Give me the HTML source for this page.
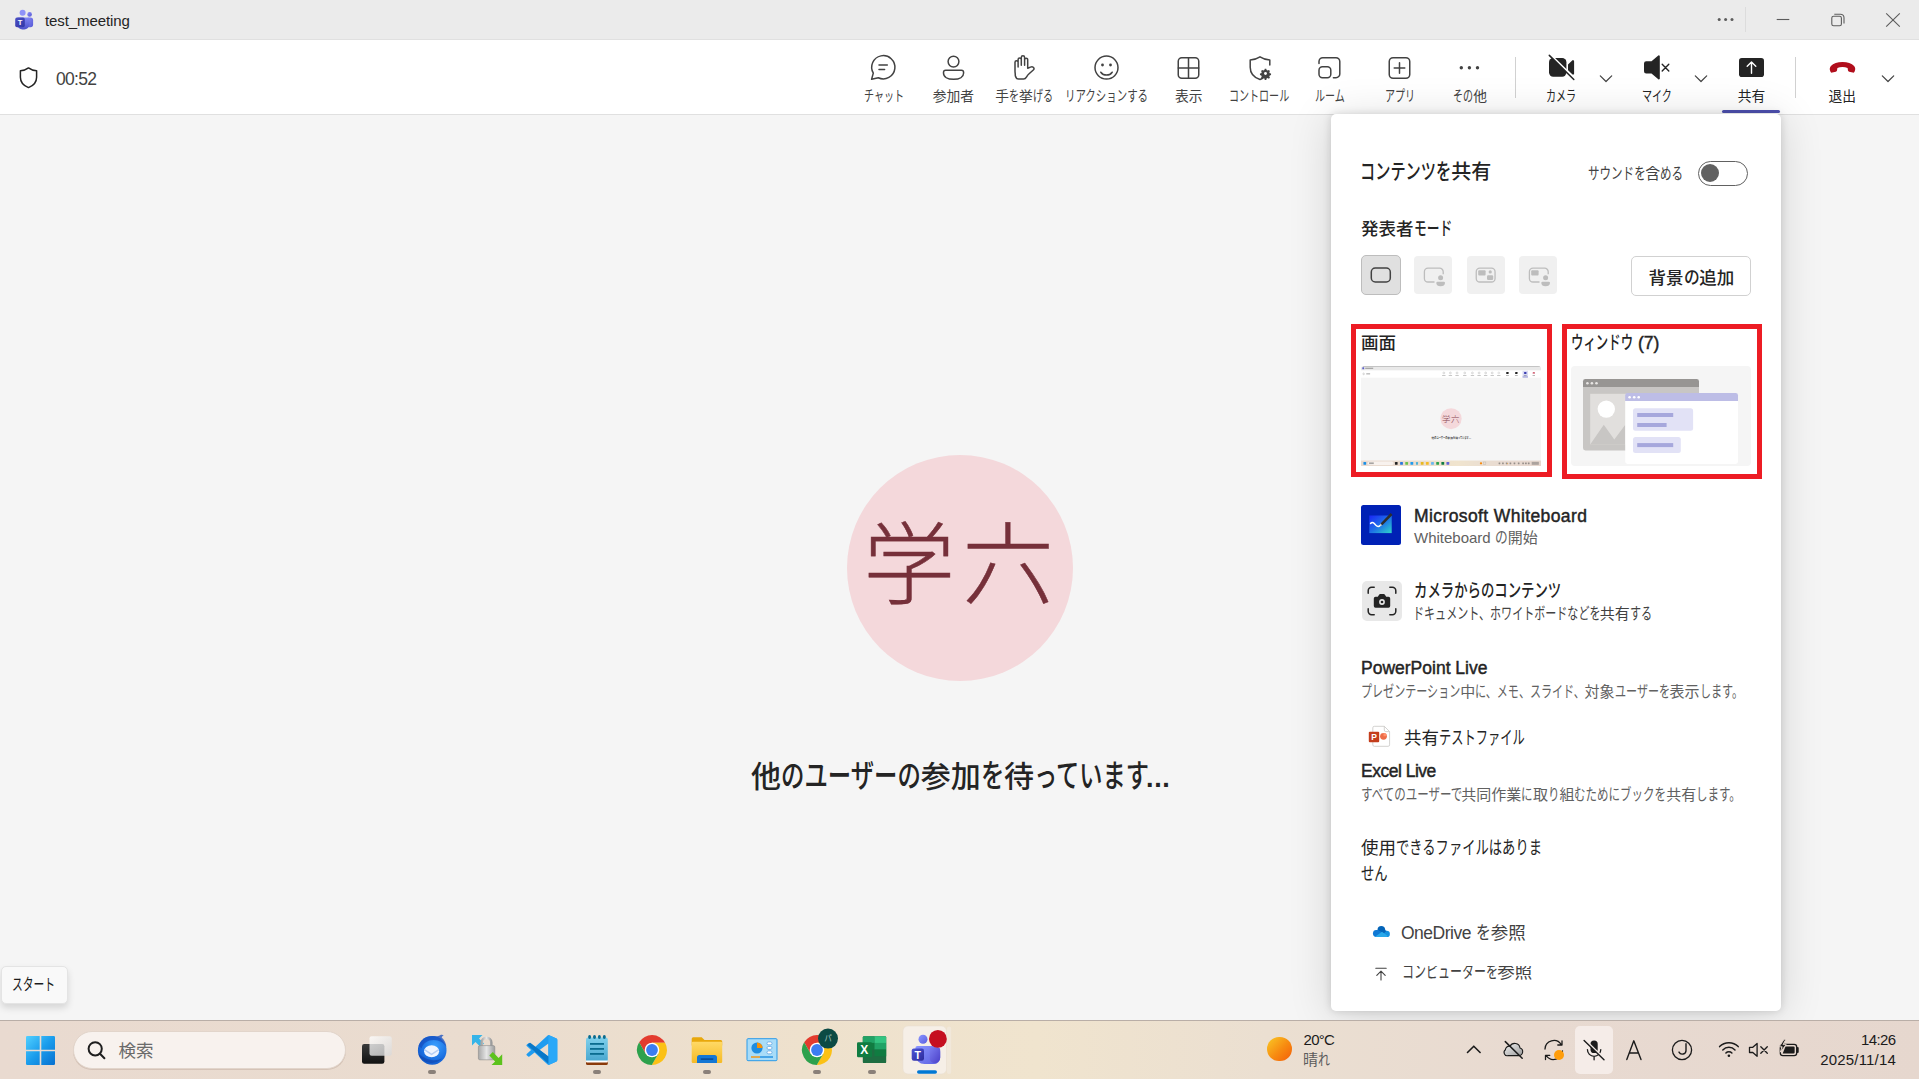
<!DOCTYPE html>
<html lang="ja">
<head>
<meta charset="utf-8">
<title>test_meeting</title>
<style>
*{box-sizing:border-box;margin:0;padding:0}
html,body{width:1919px;height:1079px;overflow:hidden;background:#f5f5f5}
body{position:relative;font-family:"Liberation Sans","Noto Sans CJK JP",sans-serif;color:#242424;font-size:15px;-webkit-font-smoothing:antialiased}
.abs{position:absolute}
.t{position:absolute;white-space:nowrap;line-height:1}
/* narrow kana runs: Yu Gothic UI style condensed kana */
.k{display:inline-block;font-size:1.07em;line-height:.9;transform:scaleX(calc(var(--s,.73)/1.07));transform-origin:0 50%;margin-right:calc(var(--n)*(var(--s,.73)/1.07 - 1)*1em);white-space:nowrap}
svg{position:absolute;overflow:visible}
/* title bar */
#titlebar{left:0;top:0;width:1919px;height:40px;background:#ebebeb;border-bottom:1px solid #e0e0e0}
/* toolbar */
#toolbar{left:0;top:40px;width:1919px;height:75px;background:#fff;border-bottom:1px solid #e0e0e0}
.lbl{position:absolute;top:88px;width:120px;margin-left:-60px;text-align:center;font-size:13.75px;line-height:17px;color:#424242;white-space:nowrap}
.sep{position:absolute;top:57px;width:1px;height:41px;background:#d1d1d1}
/* stage */
#avatar{left:847px;top:455px;width:226px;height:226px;border-radius:50%;background:#f4d8db}
/* panel */
#panel{left:1331px;top:114px;width:450px;height:897px;background:#fff;border-radius:5px;box-shadow:0 0 8px rgba(0,0,0,.15),0 4px 44px rgba(0,0,0,.14)}
.sb{font-weight:500}
.sbl{font-weight:400;-webkit-text-stroke:.45px currentColor}
.sub{color:#616161;font-size:15px}
/* taskbar */
#taskbar{left:0;top:1020px;width:1919px;height:59px;background:linear-gradient(90deg,#e9dad0 0%,#eadccf 25%,#eee1cd 42%,#f0e4ce 54%,#ebdfd1 66%,#e8dad1 80%,#e6d7ce 100%);border-top:1px solid #b9aea7}
.ind{position:absolute;top:1070px;width:8px;height:4px;border-radius:2px;background:#8a8079}
</style>
</head>
<body>

<!-- ===== TITLE BAR ===== -->
<div id="titlebar" class="abs"></div>
<div class="t" style="left:45px;top:13px;font-size:15px;color:#242424;letter-spacing:-.1px">test_meeting</div>

<!-- ===== TOOLBAR ===== -->
<div id="toolbar" class="abs"></div>
<div class="t" style="left:56px;top:71px;font-size:17.5px;color:#424242;letter-spacing:-.7px">00:52</div>


<!-- Teams logo (title bar) -->
<svg style="left:14px;top:9px" width="20" height="21" viewBox="0 0 20 21">
  <defs>
    <linearGradient id="tg1" x1="0" y1="0" x2="1" y2="1"><stop offset="0" stop-color="#8b8cf5"/><stop offset="1" stop-color="#5558d6"/></linearGradient>
    <linearGradient id="tg2" x1="0" y1="0" x2="0" y2="1"><stop offset="0" stop-color="#7f85f5"/><stop offset="1" stop-color="#4d51c9"/></linearGradient>
    <linearGradient id="tg3" x1="0" y1="0" x2="1" y2="1"><stop offset="0" stop-color="#4a4fc4"/><stop offset="1" stop-color="#3236a5"/></linearGradient>
  </defs>
  <circle cx="15.6" cy="5.4" r="2.3" fill="url(#tg1)"/>
  <rect x="12.5" y="8.6" width="6.6" height="9.6" rx="2.6" fill="url(#tg1)"/>
  <circle cx="8.6" cy="3.8" r="3" fill="#8f93f8"/>
  <path d="M4.2 8.4h10.2a1 1 0 0 1 1 1v6.1a5.1 5.1 0 0 1-5.1 5.1h-1.9a5.1 5.1 0 0 1-5.1-5.1V9.300a1 1 0 0 1 .9-.9z" fill="url(#tg2)"/>
  <rect x="1.2" y="8.600" width="9.6" height="9.6" rx="1.8" fill="url(#tg3)"/>
  <text x="6" y="16.2" font-family="Liberation Sans, sans-serif" font-weight="700" font-size="7.5" fill="#fff" text-anchor="middle">T</text>
</svg>

<!-- window controls -->
<svg style="left:1700px;top:0" width="219" height="40" viewBox="1700 0 219 40" fill="none" stroke="#5c5c5c" stroke-width="1.1">
  <circle cx="1719.2" cy="19.6" r="1.5" fill="#5c5c5c" stroke="none"/>
  <circle cx="1725.6" cy="19.6" r="1.5" fill="#5c5c5c" stroke="none"/>
  <circle cx="1732" cy="19.6" r="1.5" fill="#5c5c5c" stroke="none"/>
  <path d="M1745.500 7v25" stroke="#dcdcdc" stroke-width="1"/>
  <path d="M1776.700 19.500h12.600"/>
  <rect x="1831.800" y="16.300" width="9.600" height="9.400" rx="1.800"/>
  <path d="M1834.300 14.200h6.100a3.600 3.600 0 0 1 3.600 3.600v5.800"/>
  <path d="M1886.200 13.300l13.600 13.400M1899.800 13.300l-13.600 13.400"/>
</svg>

<!-- shield + timer -->
<svg style="left:18px;top:66px" width="22" height="24" viewBox="0 0 22 24" fill="none" stroke="#242424" stroke-width="1.5" stroke-linejoin="round">
  <path d="M10.500 1.900c2.600 1.900 5.200 2.800 8.100 2.900v6.400c0 4.900-3 8.400-8.100 10.400-5.100-2-8.100-5.500-8.100-10.400V4.800c2.900-.1 5.500-1 8.100-2.900z"/>
</svg>

<!-- ===== toolbar icons ===== -->
<svg id="tbicons" style="left:860px;top:50px" width="1050" height="36" viewBox="860 50 1050 36" fill="none" stroke="#424242" stroke-width="1.5" stroke-linecap="round" stroke-linejoin="round">
  <!-- chat -->
  <path d="M878.300 77.700L871.600 79.300l1.700-6.200a11.600 11.600 0 1 1 5 4.600z"/>
  <path d="M879 65h8.300M879 69.600h5.600"/>
  <!-- people -->
  <circle cx="953.500" cy="61.600" r="5.400"/>
  <path d="M945.700 70.200h15.700a2.200 2.200 0 0 1 2.200 2.200v.5c0 3.900-3.900 6.400-10 6.400s-10.100-2.500-10.100-6.400v-.5a2.200 2.200 0 0 1 2.200-2.200z"/>
  <!-- raise hand -->
  <path d="M1015 71V62.300a1.550 1.550 0 0 1 3.100 0V66.900M1018.100 62.300V59.600a1.600 1.600 0 0 1 3.200 0V65.200M1021.300 59.600V57.500a1.650 1.650 0 0 1 3.300 0V65.200M1024.600 59.700a1.550 1.550 0 0 1 3.100 0V68.300l2.700-1.200c1.500-.6 2.800-.3 3.400.8.400.8.200 1.500-.5 2.100l-4.200 3.800c-1 .9-1.800 1.900-2.500 3.100-.8 1.400-1.500 2.200-3 2.200h-5c-1.800 0-2.700-1.200-3.300-3.300C1015.400 74 1015 72.800 1015 71"/>
  <!-- reaction -->
  <circle cx="1106.500" cy="67.600" r="11.500"/>
  <circle cx="1102.500" cy="65" r="1.400" fill="#424242" stroke="none"/>
  <circle cx="1110.500" cy="65" r="1.400" fill="#424242" stroke="none"/>
  <path d="M1100.800 72.200c1.300 1.800 3.400 2.900 5.700 2.900s4.400-1.100 5.700-2.900"/>
  <!-- view grid -->
  <rect x="1178.250" y="57.750" width="20.500" height="20.500" rx="3.500"/>
  <path d="M1188.500 57.800v20.400M1178.300 68h20.400"/>
  <!-- control: shield + gear -->
  <path d="M1263 78.200c-.9.500-1.900.9-3 1.300-6-2-9.800-6-9.800-12.300v-7.200c3.600-.2 6.700-1.200 9.800-3.200 3.100 2 6.200 3 9.800 3.200v5"/>
  <g transform="translate(1265.500 73.500) scale(.84)" stroke="none" fill="#424242">
    <path d="M-.9-5.600h1.800l.4 1.500 1.300.6 1.400-.8 1.300 1.300-.8 1.400.6 1.300 1.500.4v1.800l-1.500.4-.6 1.300.8 1.400-1.300 1.300-1.400-.8-1.300.6-.4 1.500h-1.800l-.4-1.500-1.300-.6-1.400.8-1.300-1.300.8-1.400-.6-1.300-1.500-.4v-1.800l1.500-.4.600-1.300-.8-1.400 1.300-1.300 1.400.8 1.300-.6z"/>
    <circle r="1.700" fill="#fff"/>
  </g>
  <!-- rooms -->
  <path d="M1319 63.500v-2a3.800 3.800 0 0 1 3.800-3.800h13.200a3.800 3.800 0 0 1 3.800 3.800v12.400a3.800 3.800 0 0 1-3.800 3.800h-2.600"/>
  <rect x="1319" y="66.800" width="11.800" height="10.900" rx="3.400"/>
  <!-- apps -->
  <rect x="1389.250" y="57.750" width="20.500" height="20.500" rx="3.800"/>
  <path d="M1399.500 62.700v10.600M1394.200 68h10.600"/>
  <!-- more -->
  <circle cx="1461.300" cy="67.800" r="1.700" fill="#424242" stroke="none"/>
  <circle cx="1469.400" cy="67.800" r="1.700" fill="#424242" stroke="none"/>
  <circle cx="1477.500" cy="67.800" r="1.700" fill="#424242" stroke="none"/>
  <!-- camera off -->
  <g stroke="none" fill="#242424">
    <rect x="1549" y="58" width="17.400" height="18.700" rx="4.200"/>
    <path d="M1568 64.400l4.200-4a1.100 1.100 0 0 1 1.900.800v12.300a1.100 1.100 0 0 1-1.900.800l-4.200-4z"/>
  </g>
  <path d="M1550.400 54.600l24.800 24.400" stroke="#fff" stroke-width="1.800" stroke-linecap="butt"/>
  <path d="M1549.300 55.400l24.500 24.100" stroke="#242424" stroke-width="1.500"/>
  <!-- speaker off -->
  <path d="M1658.300 55.600a.9.900 0 0 1 1.500.700v22.200a.9.900 0 0 1-1.500.700l-6.800-5.700h-5.300a2.200 2.200 0 0 1-2.200-2.200v-7.800a2.200 2.200 0 0 1 2.200-2.200h5.300z" fill="#242424" stroke="none"/>
  <path d="M1662.200 64.300l6.600 6.600M1668.800 64.300l-6.600 6.600" stroke="#242424" stroke-width="1.400"/>
  <!-- share -->
  <rect x="1739" y="58" width="25" height="19" rx="2.800" fill="#242424" stroke="none"/>
  <path d="M1751.500 73.200V62.300M1747.200 66.300l4.300-4.300 4.300 4.300" stroke="#fff" stroke-width="1.400"/>
  <!-- leave -->
  <path d="M1842.500 62c5 0 9.200 1.500 11.600 4.100 1.300 1.400 1.400 3.300.7 5l-.3.700c-.3.700-1.100 1-1.800.8l-3.500-.9c-.6-.2-1.100-.7-1.200-1.300l-.4-2.500c-1.500-.7-3.200-1-5.100-1s-3.600.3-5.100 1l-.4 2.500c-.1.600-.6 1.100-1.200 1.300l-3.500.9c-.7.200-1.500-.1-1.800-.8l-.3-.7c-.7-1.700-.6-3.600.7-5 2.400-2.600 6.600-4.100 11.600-4.100z" fill="#b10e1c" stroke="none"/>
  <!-- chevrons -->
  <g stroke="#424242" stroke-width="1.200">
    <path d="M1600.300 75.800l5.700 5.700 5.700-5.700"/>
    <path d="M1695.300 75.800l5.700 5.700 5.700-5.700"/>
    <path d="M1882.300 75.800l5.700 5.700 5.700-5.700"/>
  </g>
</svg>
<div class="sep" style="left:1515px"></div>
<div class="sep" style="left:1795px"></div>
<div class="abs" style="left:1722px;top:110px;width:58px;height:3px;border-radius:1.5px;background:#4f52b2"></div>

<div class="lbl" style="left:883.500px"><span class="k" style="--n:4">チャット</span></div>
<div class="lbl" style="left:953.500px">参加者</div>
<div class="lbl" style="left:1024px">手<span class="k" style="--n:1">を</span>挙<span class="k" style="--n:2">げる</span></div>
<div class="lbl" style="left:1106.700px"><span class="k" style="--n:8;--s:.76">リアクションする</span></div>
<div class="lbl" style="left:1188.700px">表示</div>
<div class="lbl" style="left:1259.500px"><span class="k" style="--n:6">コントロール</span></div>
<div class="lbl" style="left:1330px"><span class="k" style="--n:3">ルーム</span></div>
<div class="lbl" style="left:1400px"><span class="k" style="--n:3">アプリ</span></div>
<div class="lbl" style="left:1470px"><span class="k" style="--n:2">その</span>他</div>
<div class="lbl" style="left:1561.500px;color:#242424"><span class="k" style="--n:3">カメラ</span></div>
<div class="lbl" style="left:1656.500px;color:#242424"><span class="k" style="--n:3">マイク</span></div>
<div class="lbl" style="left:1751.500px;color:#242424">共有</div>
<div class="lbl" style="left:1842.200px;color:#242424">退出</div>

<!-- ===== STAGE ===== -->
<div id="avatar" class="abs"></div>
<div class="t" id="av" style="left:863.300px;top:521px;font-size:90px;font-weight:300;color:#76303a;letter-spacing:6.500px;transform:scaleX(1.025);transform-origin:0 0;-webkit-text-stroke:.45px #76303a">学六</div>
<div class="t sb" id="waiting" style="left:751px;top:761.500px;font-size:30px">他<span class="k" style="--n:6;--s:.78">のユーザーの</span>参加<span class="k" style="--n:1;--s:.78">を</span>待<span class="k" style="--n:5;--s:.775">っています</span><span style="font-weight:700;font-size:27px;letter-spacing:.6px;margin-left:-2.500px">...</span></div>

<!-- ===== SHARE PANEL ===== -->
<div id="panel" class="abs"></div>


<div class="t sb" id="p_title" style="left:1360px;top:162px;font-size:20px;--s:.76"><span class="k" style="--n:6">コンテンツを</span>共有</div>
<div class="t" id="p_sound" style="left:1587.500px;top:166px;font-size:15px;color:#424242;--s:.77"><span class="k" style="--n:5">サウンドを</span>含<span class="k" style="--n:2">める</span></div>
<div class="abs" style="left:1698px;top:161px;width:50px;height:25px;border:1.300px solid #616161;border-radius:12.500px"></div>
<div class="abs" style="left:1701px;top:164px;width:18px;height:18px;border-radius:50%;background:#616161"></div>

<div class="t sb" id="p_mode" style="left:1361px;top:221px;font-size:17.500px">発表者<span class="k" style="--n:3">モード</span></div>

<!-- presenter mode buttons -->
<div class="abs" style="left:1361px;top:255px;width:40px;height:40px;border:1px solid #bdbdbd;border-radius:5px;background:#e0e0e0"></div>
<div class="abs" style="left:1414px;top:256px;width:38px;height:38px;border-radius:4px;background:#f0f0f0"></div>
<div class="abs" style="left:1467px;top:256px;width:38px;height:38px;border-radius:4px;background:#f0f0f0"></div>
<div class="abs" style="left:1519px;top:256px;width:38px;height:38px;border-radius:4px;background:#f0f0f0"></div>
<svg style="left:1361px;top:255px" width="200" height="40" viewBox="1361 255 200 40" fill="none">
  <rect x="1371.300" y="268" width="19" height="14" rx="4" stroke="#424242" stroke-width="1.500"/>
  <g stroke="#bdbdbd" stroke-width="1.300" fill="none">
    <path d="M1434.500 282h-6.500a3.600 3.600 0 0 1-3.600-3.600v-6.600a3.600 3.600 0 0 1 3.600-3.600h11.600a3.600 3.600 0 0 1 3.600 3.600v2.400"/>
    <rect x="1476.250" y="268.200" width="18.800" height="13.800" rx="3.600"/>
    <path d="M1539.500 282h-6.500a3.600 3.600 0 0 1-3.600-3.600v-6.600a3.600 3.600 0 0 1 3.600-3.600h11.600a3.600 3.600 0 0 1 3.600 3.600v2.400"/>
  </g>
  <g fill="#bdbdbd">
    <circle cx="1440.600" cy="277.700" r="2.500"/>
    <path d="M1437.400 281.800h6.500a1.100 1.100 0 0 1 1.100 1.100c0 2-1.700 3.300-4.400 3.300s-4.300-1.300-4.300-3.300a1.100 1.100 0 0 1 1.100-1.100z"/>
    <rect x="1478.200" y="270.200" width="7.400" height="5.400" rx="1"/>
    <circle cx="1490.200" cy="271.900" r="1.600"/>
    <rect x="1487" y="275.300" width="6.200" height="4.600" rx="1.200"/>
    <rect x="1531.200" y="270.200" width="7.400" height="5.400" rx="1"/>
    <circle cx="1545.600" cy="277.700" r="2.500"/>
    <path d="M1542.400 281.800h6.500a1.100 1.100 0 0 1 1.100 1.100c0 2-1.700 3.300-4.400 3.300s-4.300-1.300-4.300-3.300a1.100 1.100 0 0 1 1.100-1.100z"/>
  </g>
</svg>
<div class="abs" style="left:1631px;top:256px;width:120px;height:40px;border:1px solid #d1d1d1;border-radius:5px;background:#fff"></div>
<div class="t sb" id="p_bg" style="left:1648.500px;top:269.500px;font-size:17.500px">背景<span class="k" style="--n:1;--s:.9">の</span>追加</div>

<!-- share tiles with red annotation boxes -->
<div class="abs" style="left:1351px;top:324px;width:201px;height:153px;border:5px solid #ed1c24"></div>
<div class="abs" style="left:1562px;top:324px;width:200px;height:155px;border:5px solid #ed1c24"></div>
<div class="t sb" id="p_screen" style="left:1361px;top:335px;font-size:17.500px">画面</div>
<div class="t sb" id="p_window" style="left:1571px;top:335px;font-size:17.500px;--s:.71"><span class="k" style="--n:5">ウィンドウ</span> <span class="sbl">(7)</span></div>

<!-- screen thumbnail (miniature of the whole screen) -->
<div id="thumb1" class="abs" style="left:1361px;top:366px;width:180px;height:100px;background:#f5f5f5;border-radius:3px 3px 0 0;overflow:hidden">
  <div class="abs" style="left:0;top:0;width:1919px;height:1079px;transform:scale(.0938,.0927);transform-origin:0 0;background:#f5f5f5">
    <div class="abs" style="left:0;top:0;width:1919px;height:48px;background:#e9e9e9"></div>
    <div class="abs" style="left:14px;top:14px;width:20px;height:22px;border-radius:4px;background:#5b5fc7"></div>
    <div class="abs" style="left:45px;top:18px;width:85px;height:14px;background:#666;opacity:.5"></div>
    <div class="abs" style="left:0;top:48px;width:1919px;height:78px;background:#fff"></div>
    <div class="abs" style="left:19px;top:74px;width:18px;height:22px;border:4px solid #666;border-radius:6px;opacity:.6"></div>
    <div class="abs" style="left:56px;top:78px;width:41px;height:13px;background:#666;opacity:.5"></div>
    <div class="abs" style="left:0;top:8px"><div class="abs" style="left:872px;top:56px;width:22px;height:22px;border:4px solid #555;border-radius:8px;opacity:.55"></div><div class="abs" style="left:865px;top:90px;width:36px;height:10px;background:#777;opacity:.45"></div><div class="abs" style="left:942px;top:56px;width:22px;height:22px;border:4px solid #555;border-radius:8px;opacity:.55"></div><div class="abs" style="left:935px;top:90px;width:36px;height:10px;background:#777;opacity:.45"></div><div class="abs" style="left:1013px;top:56px;width:22px;height:22px;border:4px solid #555;border-radius:8px;opacity:.55"></div><div class="abs" style="left:1006px;top:90px;width:36px;height:10px;background:#777;opacity:.45"></div><div class="abs" style="left:1095px;top:56px;width:22px;height:22px;border:4px solid #555;border-radius:8px;opacity:.55"></div><div class="abs" style="left:1088px;top:90px;width:36px;height:10px;background:#777;opacity:.45"></div><div class="abs" style="left:1177px;top:56px;width:22px;height:22px;border:4px solid #555;border-radius:8px;opacity:.55"></div><div class="abs" style="left:1170px;top:90px;width:36px;height:10px;background:#777;opacity:.45"></div><div class="abs" style="left:1248px;top:56px;width:22px;height:22px;border:4px solid #555;border-radius:8px;opacity:.55"></div><div class="abs" style="left:1241px;top:90px;width:36px;height:10px;background:#777;opacity:.45"></div><div class="abs" style="left:1318px;top:56px;width:22px;height:22px;border:4px solid #555;border-radius:8px;opacity:.55"></div><div class="abs" style="left:1311px;top:90px;width:36px;height:10px;background:#777;opacity:.45"></div><div class="abs" style="left:1388px;top:56px;width:22px;height:22px;border:4px solid #555;border-radius:8px;opacity:.55"></div><div class="abs" style="left:1381px;top:90px;width:36px;height:10px;background:#777;opacity:.45"></div><div class="abs" style="left:1458px;top:56px;width:22px;height:22px;border:4px solid #777;border-radius:8px;opacity:.55"></div><div class="abs" style="left:1451px;top:90px;width:36px;height:10px;background:#777;opacity:.45"></div><div class="abs" style="left:1548px;top:57px;width:26px;height:21px;border-radius:4px;background:#222"></div><div class="abs" style="left:1546px;top:90px;width:30px;height:10px;background:#666;opacity:.5"></div><div class="abs" style="left:1643px;top:57px;width:26px;height:21px;border-radius:4px;background:#222"></div><div class="abs" style="left:1641px;top:90px;width:30px;height:10px;background:#666;opacity:.5"></div><div class="abs" style="left:1722px;top:44px;width:58px;height:68px;background:#c9cbf0;opacity:.7"></div><div class="abs" style="left:1739px;top:57px;width:25px;height:20px;border-radius:3px;background:#3b3fb0"></div><div class="abs" style="left:1736px;top:90px;width:30px;height:10px;background:#666;opacity:.5"></div><div class="abs" style="left:1722px;top:108px;width:58px;height:6px;background:#4f52b2"></div><div class="abs" style="left:1830px;top:60px;width:25px;height:13px;border-radius:8px 8px 2px 2px;background:#c4314b"></div><div class="abs" style="left:1829px;top:90px;width:26px;height:10px;background:#666;opacity:.5"></div></div>
    <div class="abs" style="left:847px;top:455px;width:226px;height:226px;border-radius:50%;background:#f4d8db"></div>
    <div class="t" style="left:864px;top:524px;font-size:90px;font-weight:300;color:#854450;letter-spacing:6px">学六</div>
    <div class="t sb" style="left:751px;top:761px;font-size:30px;font-weight:700;color:#444">他<span class="k" style="--n:6;--s:.78">のユーザーの</span>参加<span class="k" style="--n:1;--s:.78">を</span>待<span class="k" style="--n:5;--s:.775">っています</span>...</div>
    <div class="abs" style="left:0;top:1020px;width:1919px;height:59px;background:linear-gradient(90deg,#e9dad0 0%,#eadccf 25%,#eee1cd 42%,#f0e4ce 54%,#ebdfd1 66%,#e8dad1 80%,#e6d7ce 100%)">
      <div class="abs" style="left:0;top:-1020px"><div class="abs" style="left:26px;top:1035px;width:29px;height:30px;border-radius:6px;background:#1a8fe6"></div><div class="abs" style="left:362px;top:1035px;width:28px;height:30px;border-radius:6px;background:#222"></div><div class="abs" style="left:417px;top:1035px;width:30px;height:30px;border-radius:6px;background:#2a78e0"></div><div class="abs" style="left:472px;top:1035px;width:30px;height:30px;border-radius:6px;background:#6cc24a"></div><div class="abs" style="left:527px;top:1035px;width:30px;height:30px;border-radius:6px;background:#1f9cf0"></div><div class="abs" style="left:586px;top:1035px;width:22px;height:30px;border-radius:6px;background:#4fb0d6"></div><div class="abs" style="left:637px;top:1035px;width:30px;height:30px;border-radius:6px;background:#e8b820"></div><div class="abs" style="left:692px;top:1035px;width:30px;height:30px;border-radius:6px;background:#f5ba25"></div><div class="abs" style="left:747px;top:1035px;width:30px;height:30px;border-radius:6px;background:#6ab8f0"></div><div class="abs" style="left:802px;top:1035px;width:30px;height:30px;border-radius:6px;background:#2da14c"></div><div class="abs" style="left:857px;top:1035px;width:30px;height:30px;border-radius:6px;background:#107c41"></div><div class="abs" style="left:911px;top:1035px;width:30px;height:30px;border-radius:6px;background:#6264d8"></div><div class="abs" style="left:73px;top:1031px;width:273px;height:38px;border-radius:19px;background:#f8f2ee"></div><div class="abs" style="left:86px;top:1040px;width:50px;height:18px;background:#555;opacity:.5"></div><div class="abs" style="left:1267px;top:1037px;width:25px;height:25px;border-radius:50%;background:#f78a10"></div><div class="abs" style="left:1303px;top:1034px;width:30px;height:30px;border:3px solid #777;opacity:.6"></div><div class="abs" style="left:1467px;top:1041px;width:18px;height:18px;background:#444;opacity:.5;border-radius:4px"></div><div class="abs" style="left:1504px;top:1041px;width:18px;height:18px;background:#444;opacity:.5;border-radius:4px"></div><div class="abs" style="left:1544px;top:1041px;width:18px;height:18px;background:#444;opacity:.5;border-radius:4px"></div><div class="abs" style="left:1584px;top:1041px;width:18px;height:18px;background:#444;opacity:.5;border-radius:4px"></div><div class="abs" style="left:1627px;top:1041px;width:18px;height:18px;background:#444;opacity:.5;border-radius:4px"></div><div class="abs" style="left:1672px;top:1041px;width:18px;height:18px;background:#444;opacity:.5;border-radius:4px"></div><div class="abs" style="left:1719px;top:1041px;width:18px;height:18px;background:#444;opacity:.5;border-radius:4px"></div><div class="abs" style="left:1749px;top:1041px;width:18px;height:18px;background:#444;opacity:.5;border-radius:4px"></div><div class="abs" style="left:1779px;top:1041px;width:18px;height:18px;background:#444;opacity:.5;border-radius:4px"></div><div class="abs" style="left:1559px;top:1050px;width:10px;height:10px;border-radius:50%;background:#ff9d0a"></div><div class="abs" style="left:1820px;top:1034px;width:76px;height:32px;background:#555;opacity:.4"></div></div>
    </div>
  </div>
  <div class="abs" style="left:1.500px;top:0;width:177px;height:1px;background:#c4c4c4"></div>
</div>

<!-- window thumbnail -->
<svg id="thumb2" style="left:1571px;top:366px" width="180" height="100" viewBox="1571 366 180 100">
  <rect x="1571" y="366" width="180" height="100" rx="4" fill="#f5f5f5"/>
  <path d="M1583 381.500a2.400 2.400 0 0 1 2.400-2.400h111.200a2.400 2.400 0 0 1 2.400 2.400v5.600h-116z" fill="#979593"/>
  <path d="M1583 387h116v63.500h-113.600a2.400 2.400 0 0 1-2.400-2.400z" fill="#c8c6c4"/>
  <rect x="1590.200" y="393.800" width="60" height="50.600" fill="#e1dfdd"/>
  <circle cx="1606.300" cy="409.100" r="8.700" fill="#fff"/>
  <path d="M1590.200 444.400l13.600-19.600 10.500 14.700 11-14.700v19.600z" fill="#c8c6c4"/>
  <circle cx="1587.400" cy="383.300" r="1.300" fill="#e8e6e4"/><circle cx="1591.900" cy="383.300" r="1.300" fill="#e8e6e4"/><circle cx="1596.500" cy="383.300" r="1.300" fill="#e8e6e4"/>
  <path d="M1625.200 395.400a2.400 2.400 0 0 1 2.400-2.400h108a2.400 2.400 0 0 1 2.400 2.400v5.600h-112.800z" fill="#bdbde6"/>
  <path d="M1625.200 401h112.800v60.500a2.400 2.400 0 0 1-2.400 2.400h-108a2.400 2.400 0 0 1-2.400-2.400z" fill="#fff"/>
  <circle cx="1629.600" cy="397.300" r="1.300" fill="#fff"/><circle cx="1634.200" cy="397.300" r="1.300" fill="#fff"/><circle cx="1638.700" cy="397.300" r="1.300" fill="#fff"/>
  <rect x="1633" y="408.300" width="60.100" height="22.500" rx="2.500" fill="#e2e2f6"/>
  <rect x="1637.200" y="413" width="36" height="4" fill="#a6a7dc"/>
  <rect x="1637.200" y="423" width="29.400" height="4" fill="#a6a7dc"/>
  <rect x="1633" y="437.100" width="47.800" height="15.800" rx="2.500" fill="#e2e2f6"/>
  <rect x="1637.200" y="443.100" width="36" height="4" fill="#a6a7dc"/>
</svg>


<!-- Whiteboard row -->
<svg style="left:1361px;top:505px" width="40" height="40" viewBox="0 0 40 40">
  <defs><linearGradient id="wbg" x1="0" y1="0" x2="1" y2="1"><stop offset="0" stop-color="#1a25f7"/><stop offset=".5" stop-color="#1d6fe8"/><stop offset="1" stop-color="#2fd6c8"/></linearGradient></defs>
  <rect width="40" height="40" rx="2.500" fill="#0021b5"/>
  <rect x="8.300" y="10.500" width="22.400" height="17.600" fill="url(#wbg)"/>
  <path d="M9.600 18.500c1-1.300 2.300-1.300 3.400-.2l1.900 2c1.500 1.500 3 1.500 4.200.2" fill="none" stroke="#fff" stroke-width="1.500" stroke-linecap="round"/>
  <path d="M18.700 20.900l.9-2.300 1.700 1.600z" fill="#e8d8c0"/>
  <path d="M19.600 18.600l10-10.500 1.900 1.800-10.200 10.300z" fill="#2d2d2d"/>
</svg>
<div class="t sbl" id="p_wb1" style="left:1414px;top:508px;font-size:17.500px;letter-spacing:.4px">Microsoft Whiteboard</div>
<div class="t sub" id="p_wb2" style="left:1414px;top:530px">Whiteboard <span class="k" style="--n:1;--s:.85">の</span>開始</div>

<!-- Camera content row -->
<div class="abs" style="left:1362px;top:581px;width:40px;height:40px;border-radius:5px;background:#e8e8e8"></div>
<svg style="left:1362px;top:581px" width="40" height="40" viewBox="0 0 40 40" fill="none" stroke="#242424" stroke-width="1.500" stroke-linecap="round">
  <path d="M6.200 12.300v-2.600a3.400 3.400 0 0 1 3.400-3.400h2.600M27.800 6.300h2.600a3.400 3.400 0 0 1 3.400 3.400v2.600M33.800 27.700v2.600a3.400 3.400 0 0 1-3.400 3.400h-2.600M12.200 33.700h-2.600a3.400 3.400 0 0 1-3.400-3.400v-2.600"/>
  <path d="M13.500 15.800h2.300l1.300-2.100a1.300 1.300 0 0 1 1.100-.6h3.600a1.300 1.300 0 0 1 1.100.6l1.300 2.100h2.300a1.700 1.700 0 0 1 1.700 1.700v7.600a1.700 1.700 0 0 1-1.700 1.700h-13a1.700 1.700 0 0 1-1.700-1.700v-7.600a1.700 1.700 0 0 1 1.700-1.700z" fill="#242424" stroke="none"/>
  <circle cx="20" cy="21" r="2.900" fill="#e8e8e8" stroke="none"/>
  <circle cx="20" cy="21" r="1.300" fill="#242424" stroke="none"/>
</svg>
<div class="t sb" id="p_cam1" style="left:1414px;top:583px;font-size:17.500px;--s:.765"><span class="k" style="--n:11">カメラからのコンテンツ</span></div>
<div class="t" id="p_cam2" style="left:1412.500px;top:606px;font-size:15px;color:#424242;--s:.737"><span class="k" style="--n:17">ドキュメント、ホワイトボードなどを</span>共有<span class="k" style="--n:2">する</span></div>

<!-- PowerPoint Live -->
<div class="t sbl" id="p_ppt1" style="left:1361px;top:659.500px;font-size:17.500px;letter-spacing:0">PowerPoint Live</div>
<div class="t sub" id="p_ppt2" style="left:1361px;top:684px;--s:.738"><span class="k" style="--n:9">プレゼンテーション</span>中<span class="k" style="--n:10">に、メモ、スライド、</span>対象<span class="k" style="--n:5">ユーザーを</span>表示<span class="k" style="--n:4">します。</span></div>
<svg style="left:1368px;top:725px" width="23" height="23" viewBox="0 0 23 23">
  <path d="M6.300 1.300h10l5.300 5.300v13.200a1.500 1.500 0 0 1-1.500 1.500h-13.800a1.500 1.500 0 0 1-1.500-1.500v-17a1.500 1.500 0 0 1 1.500-1.500z" fill="#fff" stroke="#c8c6c4" stroke-width=".8"/>
  <path d="M16.300 1.300v3.800a1.500 1.500 0 0 0 1.500 1.500h3.800" fill="none" stroke="#c8c6c4" stroke-width=".8"/>
  <circle cx="15.500" cy="11.300" r="3.400" fill="#ed6c47"/>
  <path d="M15.500 7.900a3.400 3.400 0 0 1 3.400 3.400h-3.400z" fill="#ff8f6b"/>
  <rect x=".8" y="6.800" width="10.400" height="10.400" rx="1" fill="#c43e1c"/>
  <text x="6" y="15.300" font-family="Liberation Sans, sans-serif" font-weight="700" font-size="8.500" fill="#fff" text-anchor="middle">P</text>
</svg>
<div class="t" id="p_file" style="left:1404px;top:729.500px;font-size:17.500px;--s:.70">共有<span class="k" style="--n:7">テストファイル</span></div>

<!-- Excel Live -->
<div class="t sbl" id="p_xl1" style="left:1361px;top:762.500px;font-size:17.500px;letter-spacing:-.5px">Excel Live</div>
<div class="t sub" id="p_xl2" style="left:1361px;top:787px;--s:.767"><span class="k" style="--n:9">すべてのユーザーで</span>共同作業<span class="k" style="--n:1">に</span>取<span class="k" style="--n:1">り</span>組<span class="k" style="--n:8">むためにブックを</span>共有<span class="k" style="--n:4">します。</span></div>
<div class="t" id="p_nofile" style="left:1361px;top:836px;font-size:17.500px;line-height:25.500px;--s:.76">使用<span class="k" style="--n:11">できるファイルはありま</span><br><span class="k" style="--n:2">せん</span></div>

<!-- OneDrive -->
<svg style="left:1372.800px;top:926px" width="17" height="11.200" viewBox="0 0 17 11.200">
  <circle cx="13.700" cy="7.900" r="3.200" fill="#1490df"/>
  <path d="M10.400 5.200l3.300-.5.800 6.400h-5z" fill="#1490df"/>
  <circle cx="8.300" cy="3.700" r="3.750" fill="#0364b8"/>
  <path d="M5 5.200l6.600-2.600 1.600 2.600-2.600 2.300-4.200-.500z" fill="#0364b8"/>
  <circle cx="3.400" cy="7.500" r="3.450" fill="#0f78d4"/>
  <path d="M2.800 4.100c1.500-.3 3 .1 4.200 1l3 2.200-5.700 3.800h-1.500z" fill="#0f78d4"/>
  <path d="M3.400 11.100a3.300 3.300 0 0 1-1.400-.4l7-5 5.800 4.400a3 3 0 0 1-1.300 1z" fill="#28a8ea"/>
</svg>
<div class="t" id="p_od" style="left:1401px;top:925px;font-size:17.500px;color:#424242"><span style="letter-spacing:-.5px">OneDrive</span> <span class="k" style="--n:1;--s:.85">を</span>参照</div>

<!-- Browse computer (clipped at top like the original) -->
<svg style="left:1375px;top:967px" width="12" height="14" viewBox="0 0 12 14" fill="none" stroke="#424242" stroke-width="1.100" stroke-linecap="round" stroke-linejoin="round">
  <path d="M.8 1.300h10.400M6 13V4.300M1.800 8.300L6 4.100l4.200 4.200"/>
</svg>
<div class="abs" style="left:1400px;top:966px;width:140px;height:19px;overflow:hidden">
  <div class="t" id="p_pc" style="left:1.500px;top:-2px;font-size:17.500px;color:#424242;--s:.685"><span class="k" style="--n:8">コンピューターを</span>参照</div>
</div>

<!-- ===== TASKBAR ===== -->
<div id="taskbar" class="abs"></div>


<!-- Start tooltip -->
<div class="abs" style="left:.500px;top:965.500px;width:67px;height:38.500px;border-radius:5px;background:#f9f9f9;border:1px solid #e4e4e4;box-shadow:0 4px 7px rgba(0,0,0,.13)"></div>
<div class="t" id="tt" style="left:12px;top:977px;font-size:15px;color:#1b1b1b;--s:.72"><span class="k" style="--n:4">スタート</span></div>

<!-- Windows logo -->
<svg style="left:26px;top:1036px" width="29" height="29" viewBox="0 0 29 29">
  <defs><linearGradient id="wlg" x1="0" y1="0" x2="1" y2="1"><stop offset="0" stop-color="#52d0ff"/><stop offset=".5" stop-color="#1a9cec"/><stop offset="1" stop-color="#0670d0"/></linearGradient></defs>
  <path d="M1.200 0h12.500v13.700h-13.700v-12.500a1.200 1.200 0 0 1 1.200-1.200zM15.300 0h12.500a1.200 1.200 0 0 1 1.200 1.200v12.500h-13.700zM0 15.300h13.700v13.700h-12.500a1.200 1.200 0 0 1-1.200-1.200zM15.300 15.300h13.700v12.500a1.200 1.200 0 0 1-1.200 1.200h-12.500z" fill="url(#wlg)"/>
</svg>

<!-- Search box -->
<div class="abs" style="left:73px;top:1031px;width:273px;height:38px;border-radius:19px;background:#f8f2ee;border:1px solid #e2d5cb;box-shadow:0 1px 0 rgba(120,90,70,.18)"></div>
<svg style="left:86px;top:1040px" width="20" height="20" viewBox="0 0 20 20" fill="none" stroke="#1f1f1f" stroke-width="2" stroke-linecap="round">
  <circle cx="9.200" cy="8.800" r="6.600"/><path d="M14 13.700l4.400 4.500"/>
</svg>
<div class="t" style="left:118.500px;top:1042.500px;font-size:17.500px;color:#6a6a6a">検索</div>

<!-- taskbar app icons -->
<svg id="tbapps" style="left:355px;top:1024px" width="600" height="55" viewBox="355 1024 600 55">
  <defs>
    <linearGradient id="tvb" x1="0" y1="0" x2="0" y2="1"><stop offset="0" stop-color="#3a3a3a"/><stop offset="1" stop-color="#111"/></linearGradient>
    <linearGradient id="tvw" x1="0" y1="0" x2="1" y2="1"><stop offset="0" stop-color="#ffffff"/><stop offset="1" stop-color="#d8d8d8"/></linearGradient>
    <radialGradient id="tbd" cx=".6" cy=".35" r=".8"><stop offset="0" stop-color="#3aa0ff"/><stop offset=".6" stop-color="#1a6ee0"/><stop offset="1" stop-color="#0f4fc0"/></radialGradient>
    <linearGradient id="npd" x1="0" y1="0" x2="0" y2="1"><stop offset="0" stop-color="#7fd0ec"/><stop offset="1" stop-color="#4aa8d0"/></linearGradient>
    <linearGradient id="fld" x1="0" y1="0" x2="0" y2="1"><stop offset="0" stop-color="#ffd966"/><stop offset="1" stop-color="#f5ba25"/></linearGradient>
    <linearGradient id="lck" x1="0" y1="0" x2="1" y2="0"><stop offset="0" stop-color="#a8a8a8"/><stop offset=".5" stop-color="#e6e6e6"/><stop offset="1" stop-color="#9c9c9c"/></linearGradient>
    <linearGradient id="tmA" x1="0" y1="0" x2="1" y2="1"><stop offset="0" stop-color="#8b95ff"/><stop offset="1" stop-color="#5a5fe0"/></linearGradient>
    <linearGradient id="tmB" x1="0" y1="0" x2="1" y2="1"><stop offset="0" stop-color="#7a7cf0"/><stop offset="1" stop-color="#4a3fc8"/></linearGradient>
    <linearGradient id="tmC" x1="0" y1="0" x2="1" y2="1"><stop offset="0" stop-color="#4d55d8"/><stop offset="1" stop-color="#2c2a9a"/></linearGradient>
  </defs>
  <!-- task view -->
  <rect x="362" y="1044" width="22.400" height="19.700" rx="2.200" fill="url(#tvb)"/>
  <rect x="369.500" y="1036.200" width="22.300" height="19.500" rx="2.200" fill="url(#tvw)" opacity=".78"/>
  <!-- thunderbird -->
  <circle cx="432.200" cy="1050.400" r="14.300" fill="url(#tbd)"/>
  <path d="M418.600 1046c1.500-6 7-10 13.500-10 3 0 5.600.6 8-.8 1.400-.8 2.600-.6 3.600.2-1 .3-1.700 1-2 2 2.800 2.400 4.600 6 4.700 10-2.500-4.600-7-7.400-12.600-7.400-6 0-10.600 3-12.200 8.200-1.600-1.300-2.700-1.600-3-2.200z" fill="#154fc0" opacity=".75"/>
  <path d="M418.200 1053.500c1.800 5.500 6.600 9 12.600 9.400 4.400.3 8.600-1.500 11.400-4.600-3 1.600-6.600 2.300-10.400 1.700-6-.9-10.800-4-13.600-6.500z" fill="#0e3fa8" opacity=".55"/>
  <ellipse cx="431.600" cy="1051.300" rx="7.500" ry="6" fill="#eef4ff"/>
  <path d="M424.400 1049.600l7.200 4.800 7.200-4.800" fill="none" stroke="#b4cdf5" stroke-width="1.400"/>
  <!-- winscp-like -->
  <path d="M472 1035h10.500l-3.500 3.500 5 5-3.500 3.500-5-5-3.500 3.500z" fill="#36b4e8"/>
  <path d="M481.700 1046v-3.500a4.800 4.800 0 0 1 9.600 0v3.500" fill="none" stroke="url(#lck)" stroke-width="2.600"/>
  <rect x="478.400" y="1045.600" width="16.400" height="14.200" rx="1.500" fill="url(#lck)" stroke="#8a8a8a" stroke-width=".6"/>
  <path d="M502.200 1065h-10.700l3.600-3.600-5.800-5.800 3.500-3.500 5.800 5.800 3.600-3.600z" fill="#5cc21c"/>
  <!-- vscode -->
  <path d="M549.200 1035.200l7.300 3.400a1.400 1.400 0 0 1 .8 1.300v20.200a1.400 1.400 0 0 1-.8 1.300l-7.300 3.400a1.400 1.400 0 0 1-1.600-.3l-13-11.900-5.200 4a1 1 0 0 1-1.200 0l-1.500-1.400a.9.900 0 0 1 0-1.300l4.400-3.900-4.400-3.900a.9.900 0 0 1 0-1.300l1.500-1.400a1 1 0 0 1 1.200 0l5.200 4 13-11.900a1.400 1.400 0 0 1 1.600-.3zm-.8 8.400l-8.800 6.400 8.800 6.400z" fill="#1f9cf0"/>
  <path d="M549.200 1035.200l7.300 3.400a1.400 1.400 0 0 1 .8 1.300v20.200a1.400 1.400 0 0 1-.8 1.300l-7.300 3.400a1.400 1.400 0 0 1-.8-1.300v-27a1.400 1.400 0 0 1 .8-1.300z" fill="#2aa8f8"/>
  <path d="M527.900 1044.300l1.500-1.400a1 1 0 0 1 1.200 0l17.800 13.500v7.100a1.400 1.400 0 0 1-.8-.600l-19.700-17.300a.9.900 0 0 1 0-1.300z" fill="#0a78c8"/>
  <!-- notepad -->
  <rect x="586" y="1060.500" width="21.800" height="4.400" rx="1.500" fill="#8a3a0a"/>
  <rect x="586" y="1058.500" width="21.800" height="4" rx="1" fill="#fff"/>
  <path d="M588 1037.500h17.800a2 2 0 0 1 2 2v21h-21.800v-21a2 2 0 0 1 2-2z" fill="url(#npd)"/>
  <g fill="#0a6c90"><ellipse cx="589.600" cy="1037" rx="1.500" ry="2"/><ellipse cx="594.500" cy="1037" rx="1.500" ry="2"/><ellipse cx="599.400" cy="1037" rx="1.500" ry="2"/><ellipse cx="604.300" cy="1037" rx="1.500" ry="2"/>
  <rect x="590" y="1043" width="14" height="1.800"/><rect x="590" y="1048" width="14" height="1.800"/><rect x="590" y="1053" width="14" height="1.800"/></g>
  <!-- chrome 1 -->
  <g transform="translate(652 1050)"><path d="M-6.32 3.65L-12.87 -7.70A15 15 0 0 1 13.10 -7.30L0.00 -7.30L0 0z" fill="#e33b2e"/><path d="M0.00 -7.30L13.10 -7.30A15 15 0 0 1 -0.23 15.00L6.32 3.65L0 0z" fill="#fbc116"/><path d="M6.32 3.65L-0.23 15.00A15 15 0 0 1 -12.87 -7.70L-6.32 3.65L0 0z" fill="#2da14c"/><circle r="7.300" fill="#fff"/><circle r="5.900" fill="#3b7df0"/></g>
  <!-- explorer -->
  <path d="M691.700 1038.800a1.500 1.500 0 0 1 1.500-1.500h8.500l2.800 2.700h16.200a1.500 1.500 0 0 1 1.500 1.500v4h-30.500z" fill="#e8a80c"/>
  <rect x="691.700" y="1041.800" width="30.500" height="21.200" rx="1.200" fill="url(#fld)"/>
  <path d="M697 1063v-5.500a2.500 2.500 0 0 1 2.500-2.500h15a2.500 2.500 0 0 1 2.500 2.500v5.500z" fill="#1477d4"/>
  <rect x="700.500" y="1058.300" width="13" height="1.600" rx=".8" fill="#0a4f9a"/>
  <!-- control panel -->
  <rect x="747" y="1038.700" width="30" height="22" rx="1" fill="#a8dcf8" stroke="#2b9be8" stroke-width="1"/>
  <circle cx="757" cy="1048" r="5.600" fill="#1f8de0"/>
  <path d="M757 1048v-5.600a5.600 5.600 0 0 1 5.600 5.600z" fill="#f5920a"/>
  <g fill="#fff" stroke="#2b7fd4" stroke-width=".5"><rect x="767" y="1042" width="5" height="2.800" rx="1.400"/><rect x="767" y="1046.500" width="5" height="2.800" rx="1.400"/><rect x="767" y="1051" width="5" height="2.800" rx="1.400"/></g>
  <rect x="751" y="1056.300" width="9" height="1.400" fill="#f5920a"/><rect x="760" y="1056.300" width="13" height="1.400" fill="#1f8de0"/>
  <!-- chrome 2 -->
  <g transform="translate(817 1050)"><path d="M-6.32 3.65L-12.87 -7.70A15 15 0 0 1 13.10 -7.30L0.00 -7.30L0 0z" fill="#e33b2e"/><path d="M0.00 -7.30L13.10 -7.30A15 15 0 0 1 -0.23 15.00L6.32 3.65L0 0z" fill="#fbc116"/><path d="M6.32 3.65L-0.23 15.00A15 15 0 0 1 -12.87 -7.70L-6.32 3.65L0 0z" fill="#2da14c"/><circle r="7.300" fill="#fff"/><circle r="5.900" fill="#3b7df0"/></g>
  <circle cx="828" cy="1038.600" r="10" fill="#0b4a44"/>
  <!-- excel -->
  <path d="M864 1036.200h21a1.200 1.200 0 0 1 1.200 1.200v24.500a1.200 1.200 0 0 1-1.200 1.200h-21a1.200 1.200 0 0 1-1.200-1.200v-24.500a1.200 1.200 0 0 1 1.200-1.200z" fill="#1e6e42"/>
  <path d="M864 1036.200h10.500v6.700h-11.700v-5.500a1.200 1.200 0 0 1 1.200-1.200z" fill="#21a366"/>
  <path d="M874.500 1036.200h10.500a1.200 1.200 0 0 1 1.200 1.200v5.500h-11.700z" fill="#33c481"/>
  <rect x="862.800" y="1042.900" width="11.700" height="6.700" fill="#107c41"/><rect x="874.500" y="1042.900" width="11.700" height="6.700" fill="#21a366"/>
  <rect x="874.500" y="1049.600" width="11.700" height="6.700" fill="#107c41"/>
  <rect x="857" y="1042.300" width="15" height="15" rx="1.200" fill="#107c41"/>
  <!-- teams (active) -->
  <rect x="947" y="1026.500" width="4.200" height="47.500" rx="2" fill="#f1e8dd" opacity=".8"/>
  <rect x="903" y="1026" width="43.500" height="48" rx="5" fill="#f6efe7" stroke="#eadfd3" stroke-width=".6"/>
  <circle cx="923" cy="1039.200" r="4.500" fill="url(#tmA)"/>
  <path d="M917.500 1046h17a5.700 5.700 0 0 1 5.700 5.700v5.800a6.600 6.600 0 0 1-6.600 6.600h-9.200a9 9 0 0 1-9-9v-7a2.100 2.100 0 0 1 2.100-2.100z" fill="url(#tmA)"/>
  <path d="M929.800 1047.500h8.200a2.200 2.200 0 0 1 2.200 2.200v8a5.500 5.500 0 0 1-5.500 5.500 5 5 0 0 1-4.900-5z" fill="url(#tmB)"/>
  <rect x="911.700" y="1048.400" width="12.300" height="12.300" rx="2.200" fill="url(#tmC)"/>
  <circle cx="937.900" cy="1038.900" r="8.900" fill="#c50f1f"/>
  <rect x="917" y="1070.200" width="20" height="3.600" rx="1.800" fill="#0078d4"/>
</svg>
<div class="t" style="left:824.200px;top:1034.800px;font-size:7.500px;color:#a9c9c3;font-weight:400">パ</div>
<div class="t" style="left:860.300px;top:1044px;font-size:12px;font-weight:700;color:#fff">X</div>
<div class="t" style="left:914.500px;top:1049.800px;font-size:10.500px;font-weight:700;color:#fff">T</div>
<div class="ind" style="left:428px"></div>
<div class="ind" style="left:593px"></div>
<div class="ind" style="left:703px"></div>
<div class="ind" style="left:813px"></div>
<div class="ind" style="left:868px"></div>

<!-- weather -->
<div class="abs" style="left:1267px;top:1036.500px;width:24.500px;height:24.500px;border-radius:50%;background:linear-gradient(135deg,#f9be22 10%,#f78a10 55%,#f4620a 95%)"></div>
<div class="t" style="left:1303.500px;top:1031.500px;font-size:15px;color:#1b1b1b;letter-spacing:-.7px">20°C</div>
<div class="t" style="left:1303px;top:1052px;font-size:15px;color:#5c5c5c">晴<span class="k" style="--n:1;--s:.8">れ</span></div>

<!-- system tray -->
<div class="abs" style="left:1575px;top:1026px;width:38px;height:48px;border-radius:5px;background:#f5ece8"></div>
<svg id="tray" style="left:1460px;top:1030px" width="350" height="40" viewBox="1460 1030 350 40" fill="none" stroke="#1b1b1b" stroke-width="1.300" stroke-linecap="round" stroke-linejoin="round">
  <path d="M1467.500 1052.500l6.300-6.300 6.300 6.300" stroke-width="1.600"/>
  <!-- onedrive paused/offline -->
  <defs><linearGradient id="odg" x1="0" y1="0" x2="1" y2="1"><stop offset="0" stop-color="#f4f4f4"/><stop offset="1" stop-color="#9a9a9a"/></linearGradient></defs>
  <path d="M1508.300 1055.600h10.600a3.900 3.900 0 0 0 1.100-7.600 5.300 5.300 0 0 0-10-1.700 3.700 3.700 0 0 0-4.600 3.500 3.300 3.300 0 0 0 2.900 5.800z" fill="url(#odg)" stroke="#1b1b1b" stroke-width="1.100"/>
  <path d="M1505.300 1041.600l16.900 16.600" stroke-width="1.500"/>
  <!-- sync -->
  <path d="M1545 1049a8.800 8.800 0 0 1 16.200-4.500M1562 1040.800v4.200h-4.200M1562.500 1051a8.800 8.800 0 0 1-16.200 4.500M1545.500 1059.600v-4.200h4.200"/>
  <circle cx="1559" cy="1055" r="5" fill="#ff9d0a" stroke="none"/>
  <!-- mic off -->
  <rect x="1590.500" y="1040.400" width="7.200" height="12.600" rx="3.600" fill="#1b1b1b" stroke="none"/>
  <path d="M1587.400 1049.600a6.700 6.700 0 0 0 13.400 0M1594.100 1056.400v3.400"/>
  <path d="M1584.900 1039.700l20 19.300" stroke="#f5ece8" stroke-width="1.600" stroke-linecap="butt"/>
  <path d="M1584.100 1040.400l19.900 19.300" stroke-width="1.400"/>
  <!-- IME A -->
  <path d="M1626.800 1059.600l7-18.800 7.200 18.800M1629.500 1053h9" stroke-width="1.400"/>
  <!-- IME J circle -->
  <circle cx="1682" cy="1050" r="9.600"/>
  <path d="M1686 1043.800v6.600a3.700 3.700 0 0 1-7 1.700" stroke-width="1.400"/>
  <!-- wifi -->
  <path stroke-width="1.500" d="M1719.600 1046.600a13 13 0 0 1 18.600 0M1722.800 1049.900a8.500 8.500 0 0 1 12.200 0M1725.900 1053a4.200 4.200 0 0 1 6 0"/>
  <circle cx="1728.900" cy="1055.700" r="1.300" fill="#1b1b1b" stroke="none"/>
  <!-- volume muted -->
  <path d="M1749.500 1047.300h3.300l4.300-3.800v12.800l-4.300-3.800h-3.300z"/>
  <path d="M1760.800 1046.800l6.500 6.500M1767.300 1046.800l-6.500 6.500"/>
  <!-- battery charging -->
  <rect x="1780.300" y="1044.300" width="16.400" height="11.400" rx="2.600"/>
  <path d="M1797.600 1048v4" stroke-width="2.200"/>
  <path d="M1785.500 1046.400h8a1.100 1.100 0 0 1 1.100 1.100v5a1.100 1.100 0 0 1-1.100 1.100h-10.800z" fill="#1b1b1b" stroke="none"/>
  <path d="M1784 1039.400l-4.800 7.400h3l-2 5.400 6-7.600h-3.200l2.800-5.200z" fill="#1b1b1b" stroke="#e7d8cf" stroke-width=".9"/>
</svg>
<div class="t" style="right:23.500px;top:1031.500px;font-size:15px;color:#1b1b1b;letter-spacing:-.6px">14:26</div>
<div class="t" style="right:23px;top:1051.500px;font-size:15px;color:#1b1b1b;letter-spacing:.18px">2025/11/14</div>

</body>
</html>
